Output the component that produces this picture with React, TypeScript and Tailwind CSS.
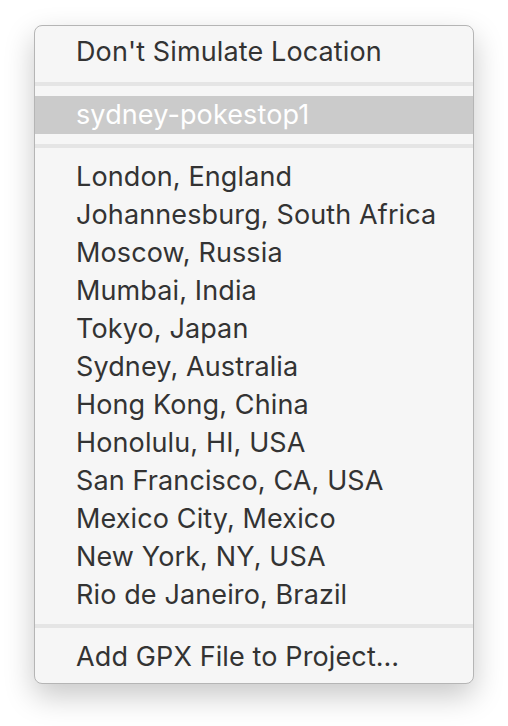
import React from "react";

const cities = [
  "London, England",
  "Johannesburg, South Africa",
  "Moscow, Russia",
  "Mumbai, India",
  "Tokyo, Japan",
  "Sydney, Australia",
  "Hong Kong, China",
  "Honolulu, HI, USA",
  "San Francisco, CA, USA",
  "Mexico City, Mexico",
  "New York, NY, USA",
  "Rio de Janeiro, Brazil",
];

function Item({ label, selected = false }: { label: string; selected?: boolean }) {
  return (
    <div
      className={
        "h-[38px] flex items-center pl-[41px] whitespace-nowrap " +
        (selected ? "bg-[#cbcbcb] text-white" : "text-[#333333]")
      }
    >
      {label}
    </div>
  );
}

function Sep({ top = "mt-[10px]" }: { top?: string }) {
  return <div className={"h-[4px] bg-[#e5e5e5] mb-[10px] " + top} />;
}

export default function App() {
  return (
    <div className="w-[508px] h-[726px] bg-white pt-[25px] pl-[34px]">
      <div
        className="w-[440px] h-[659px] bg-[#f6f6f6] rounded-[8px] border border-[#b5b5b5] py-[7px] shadow-[0_12px_30px_rgba(0,0,0,0.22)] overflow-hidden text-[27px] tracking-[0.12px]"
        style={{ fontFamily: "Inter, 'Liberation Sans', sans-serif" }}
      >
        <Item label="Don't Simulate Location" />
        <Sep top="mt-[11px]" />
        <Item label="sydney-pokestop1" selected />
        <Sep />
        {cities.map((c) => (
          <Item key={c} label={c} />
        ))}
        <Sep />
        <Item label="Add GPX File to Project…" />
      </div>
    </div>
  );
}
